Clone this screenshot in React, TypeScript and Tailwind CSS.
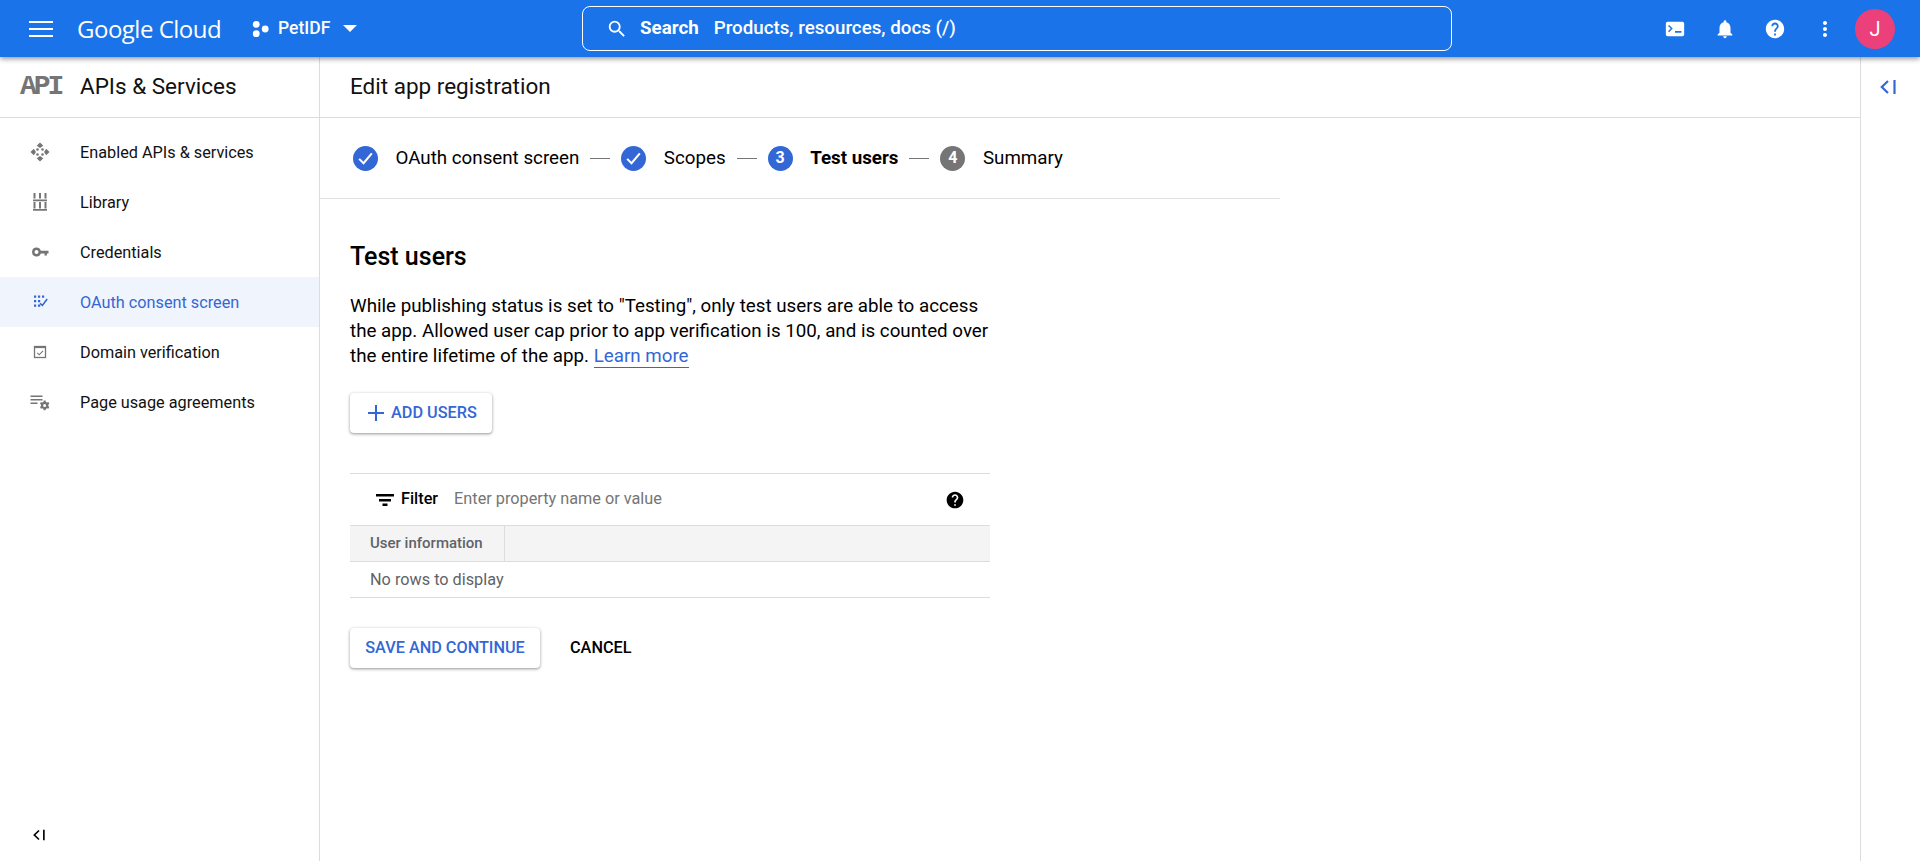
import React from 'react';

const Icon = ({ d, className }: { d: string; className?: string }) => (
  <svg viewBox="0 0 24 24" fill="currentColor" className={className}>
    <path d={d} />
  </svg>
);

const CollapseIcon = ({ className }: { className?: string }) => (
  <svg viewBox="0 0 16 14" fill="none" stroke="currentColor" strokeWidth="2.200" className={className}>
    <path d="M8 1 1.800 7 8 13" />
    <path d="M14.500 0v14" />
  </svg>
);

const navItems = [
  {
    label: 'Enabled APIs & services',
    icon: (
      <svg viewBox="0 0 20 20" fill="currentColor" className="w-5 h-5">
        <path d="M10 0.500 13.300 3.800 10 6 6.700 3.800zM10 19.500 6.700 16.200 10 14 13.300 16.200zM0.500 10 3.800 6.700 6 10 3.800 13.300zM19.500 10 16.200 13.300 14 10 16.200 6.700z" />
        <circle cx="7.500" cy="7.500" r="1.300" /><circle cx="12.500" cy="7.500" r="1.300" />
        <circle cx="7.500" cy="12.500" r="1.300" /><circle cx="12.500" cy="12.500" r="1.300" />
      </svg>
    ),
  },
  {
    label: 'Library',
    icon: (
      <svg viewBox="0 0 20 20" fill="currentColor" className="w-5 h-5">
        <path d="M3.500 1h2v5.500h-2zM9 1h2v5.500H9zM14.500 1h2v5.500h-2zM3 7.500h14v1.800H3zM3.500 10h2v6.500h-2zM9 10h2v6.500H9zM14.500 10h2v6.500h-2zM3 17h14v1.800H3z" />
      </svg>
    ),
  },
  {
    label: 'Credentials',
    icon: (
      <svg viewBox="0 0 20 20" fill="currentColor" className="w-5 h-5">
        <path fillRule="evenodd" d="M6.500 5.500a4.500 4.500 0 0 1 4.300 3.200H18.500v2.800h-1.600v2h-2.400v-2h-3.700a4.500 4.500 0 1 1-4.300-6zm0 2.500a2 2 0 1 0 0 4 2 2 0 0 0 0-4z" />
      </svg>
    ),
  },
  {
    label: 'OAuth consent screen',
    active: true,
    icon: (
      <svg viewBox="0 0 20 20" fill="currentColor" className="w-5 h-5">
        <path d="M4 3.500h2.200v2.200H4zM8 3.500h2.200v2.200H8zM12 3.500h2.200v2.200H12zM4 8h2.200v2.200H4zM8 8h2.200v2.200H8zM4 12.500h2.200v2.200H4zM8 12.500h2.200v2.200H8z" />
        <path d="m16.500 6.500 1.300 1.100-5.300 6.900-3-2.600 1-1.200 1.800 1.500z" />
      </svg>
    ),
  },
  {
    label: 'Domain verification',
    icon: (
      <svg viewBox="0 0 20 20" fill="none" stroke="currentColor" className="w-5 h-5">
        <rect x="4.500" y="4.500" width="11" height="11" strokeWidth="1.300" />
        <path d="M4.500 5.500h11" strokeWidth="1.200" />
        <path d="m7.200 10.800 2 2 3.800-4" strokeWidth="1.100" />
      </svg>
    ),
  },
  {
    label: 'Page usage agreements',
    icon: (
      <svg viewBox="0 0 20 20" fill="currentColor" className="w-5 h-5">
        <path d="M0.500 3.500h12v1.400H.5zM.5 7h12v1.400H.5zM.5 10.500h7v1.400h-7z" />
        <path fillRule="evenodd" d="M13.700 8.500h1.900l.3 1.400 1.100.6 1.400-.4.900 1.600-1 1v1.400l1 1-.9 1.600-1.400-.4-1.100.6-.3 1.400h-1.900l-.3-1.400-1.100-.6-1.400.4-.9-1.600 1-1v-1.400l-1-1 .9-1.600 1.400.4 1.100-.6zM14.650 12a1.500 1.500 0 1 0 0 3 1.500 1.500 0 0 0 0-3z" />
      </svg>
    ),
  },
];

const Step = ({ num, label, done, current }: { num: number; label: string; done?: boolean; current?: boolean }) => (
  <div className="flex items-center">
    <div className={`w-[25px] h-[25px] rounded-full flex items-center justify-center text-white text-[16px] font-bold ${done || current ? 'bg-[#3367d6]' : 'bg-[#757575]'}`}>
      {done ? (
        <svg viewBox="0 0 24 24" fill="none" stroke="white" strokeWidth="2.600" className="w-[19px] h-[19px]">
          <path d="M4 12.500 9.500 18 20 5.500" />
        </svg>
      ) : (
        num
      )}
    </div>
    <span className={`ml-[17.500px] text-[18.750px] leading-none text-black ${current ? 'font-bold' : ''}`}>{label}</span>
  </div>
);

const StepLine = () => <div className="w-5 h-px bg-[#757575] mx-[11px]" />;

export default function App() {
  return (
    <div className="h-[861px] w-[1920px] overflow-hidden bg-white flex flex-col font-['Roboto',sans-serif] text-black">
      {/* Top bar */}
      <header className="relative z-10 h-[57px] shrink-0 bg-[#1a73e8] shadow-[0_2px_5px_rgba(0,0,0,0.4)] flex items-center text-white">
        <div className="w-[582px] flex items-center shrink-0">
          <svg viewBox="0 0 24 16" fill="white" className="ml-[29px] w-6 h-4">
            <path d="M0 0h24v2H0zM0 7h24v2H0zM0 14h24v2H0z" />
          </svg>
          <span className="ml-[24px] text-[24px] leading-none tracking-[-0.5px] font-['Open_Sans',sans-serif] w-[144px] whitespace-nowrap">Google Cloud</span>
          <svg viewBox="0 0 20 20" fill="white" className="ml-[31px] w-[17px] h-[20px]">
            <circle cx="5" cy="4.500" r="4" /><circle cx="5" cy="15.500" r="4" /><circle cx="15.500" cy="10" r="4" />
          </svg>
          <span className="ml-[9px] text-[17.500px] font-medium">PetIDF</span>
          <svg viewBox="0 0 14 7" fill="white" className="ml-[13px] w-[14px] h-[7px]">
            <path d="M0 0h14L7 7z" />
          </svg>
        </div>
        <div className="w-[870px] h-[45px] border border-white rounded-lg flex items-center text-[18.750px] shrink-0">
          <Icon className="ml-[23px] w-[22px] h-[22px]" d="M15.500 14h-.79l-.28-.27A6.471 6.471 0 0 0 16 9.500 6.500 6.500 0 1 0 9.500 16c1.610 0 3.090-.59 4.230-1.570l.27.28v.79l5 4.990L20.490 19l-4.990-5zm-6 0C7.010 14 5 11.990 5 9.500S7.010 5 9.500 5 14 7.010 14 9.500 11.990 14 9.500 14z" />
          <span className="ml-[12px] font-bold">Search</span>
          <span className="ml-[15px] font-medium">Products, resources, docs (/)</span>
        </div>
        <div className="flex-1 flex items-center justify-end">
          <Icon className="w-[22px] h-[22px]" d="M20 4H4a2 2 0 0 0-2 2v12a2 2 0 0 0 2 2h16a2 2 0 0 0 2-2V6a2 2 0 0 0-2-2zM5.500 15.500 4.400 14.400 7.300 11.500 4.400 8.600l1.100-1.100 4 4zM19 16h-7v-1.800h7z" />
          <Icon className="ml-[28px] w-[22px] h-[22px]" d="M12 22c1.100 0 2-.9 2-2h-4c0 1.100.89 2 2 2zm6-6v-5c0-3.070-1.640-5.640-4.500-6.320V4c0-.83-.67-1.500-1.500-1.500s-1.500.67-1.500 1.500v.68C7.630 5.360 6 7.920 6 11v5l-2 2v1h16v-1l-2-2z" />
          <Icon className="ml-[28px] w-[22px] h-[22px]" d="M12 2C6.480 2 2 6.480 2 12s4.480 10 10 10 10-4.480 10-10S17.520 2 12 2zm1 17h-2v-2h2v2zm2.070-7.750-.9.920C13.450 12.900 13 13.500 13 15h-2v-.5c0-1.100.45-2.100 1.170-2.830l1.240-1.260c.37-.36.590-.86.590-1.410 0-1.100-.9-2-2-2s-2 .9-2 2H8c0-2.210 1.790-4 4-4s4 1.790 4 4c0 .88-.36 1.680-.93 2.250z" />
          <Icon className="ml-[27px] w-6 h-6" d="M12 8c1.100 0 2-.9 2-2s-.9-2-2-2-2 .9-2 2 .9 2 2 2zm0 2c-1.100 0-2 .9-2 2s.9 2 2 2 2-.9 2-2-.9-2-2-2zm0 6c-1.100 0-2 .9-2 2s.9 2 2 2 2-.9 2-2-.9-2-2-2z" />
          <div className="ml-[18px] mr-[25px] w-10 h-10 rounded-full bg-[#ec407a] flex items-center justify-center text-[20px]">J</div>
        </div>
      </header>

      <div className="flex-1 flex min-h-0">
        {/* Left nav */}
        <aside className="w-[320px] shrink-0 border-r border-[#dadce0] flex flex-col">
          <div className="h-[61px] shrink-0 border-b border-[#dadce0] flex items-center">
            <span className="ml-[20px] w-[40px] text-[28px] leading-none font-bold text-[#757575] font-['Liberation_Mono',monospace] tracking-[-3px]">API</span>
            <span className="ml-[20px] text-[22.500px] text-[#111111]">APIs &amp; Services</span>
          </div>
          <nav className="pt-[9px] flex-1">
            {navItems.map((item) => (
              <div key={item.label} className={`h-[50px] flex items-center text-[16.250px] ${item.active ? 'bg-[#f0f4fc] text-[#3367d6]' : 'text-[#111111]'}`}>
                <div className={`ml-[30px] w-5 h-5 ${item.active ? 'text-[#3367d6]' : 'text-[#757575]'}`}>{item.icon}</div>
                <span className="ml-[30px] pt-[2px]">{item.label}</span>
              </div>
            ))}
          </nav>
          <div className="h-[52px] shrink-0 flex items-center">
            <CollapseIcon className="ml-[33px] w-[12px] h-[12px]" />
          </div>
        </aside>

        {/* Main */}
        <main className="flex-1 min-w-0">
          <div className="h-[61px] border-b border-[#dadce0] flex items-center pl-[30px] text-[22.500px] text-[#111111]">Edit app registration</div>
          <div className="w-[960px] h-[81px] border-b border-[#e0e0e0] flex items-center pl-[33px]">
            <Step num={1} label="OAuth consent screen" done />
            <StepLine />
            <Step num={2} label="Scopes" done />
            <StepLine />
            <Step num={3} label="Test users" current />
            <StepLine />
            <Step num={4} label="Summary" />
          </div>
          <div className="pl-[30px] pt-[43px] w-[670px]">
            <h2 className="text-[25px] leading-[30px] font-medium">Test users</h2>
            <p className="mt-[22px] text-[18.750px] leading-[25px] w-[640px]">
              While publishing status is set to "Testing", only test users are able to access the app. Allowed user cap prior to app verification is 100, and is counted over the entire lifetime of the app.{' '}
              <span className="text-[#3367d6] border-b border-[#3367d6]">Learn more</span>
            </p>
            <button className="mt-[24px] h-10 w-[142px] rounded bg-white shadow-[0_1px_3px_1px_rgba(60,64,67,0.2),0_1px_2px_rgba(60,64,67,0.3)] flex items-center text-[16.250px] font-medium text-[#3367d6]">
              <svg viewBox="0 0 14 14" fill="currentColor" className="ml-[18px] w-[16px] h-[16px]">
                <path d="M6.100 0h1.800v6.100H14v1.800H7.900V14H6.100V7.900H0V6.100h6.100z" />
              </svg>
              <span className="ml-[7px]">ADD USERS</span>
            </button>
            <div className="mt-[40px] w-[640px] border-t border-[#dadce0] text-[16.250px]">
              <div className="h-[51px] flex items-center">
                <svg viewBox="0 0 18 12" fill="black" className="ml-[26px] w-[18px] h-[14px]">
                  <path d="M0 0h18v2.400H0zM3 5h12v2.400H3zM6.500 9.600h5V12h-5z" />
                </svg>
                <span className="ml-[7px] font-medium">Filter</span>
                <span className="ml-[16px] text-[#757575]">Enter property name or value</span>
                <Icon className="ml-auto mr-[25px] w-[20px] h-[20px]" d="M12 2C6.480 2 2 6.480 2 12s4.480 10 10 10 10-4.480 10-10S17.520 2 12 2zm1 17h-2v-2h2v2zm2.070-7.750-.9.920C13.450 12.900 13 13.500 13 15h-2v-.5c0-1.100.45-2.100 1.170-2.830l1.240-1.260c.37-.36.590-.86.590-1.410 0-1.100-.9-2-2-2s-2 .9-2 2H8c0-2.210 1.790-4 4-4s4 1.790 4 4c0 .88-.36 1.680-.93 2.250z" />
              </div>
              <div className="h-[37px] border-y border-[#dadce0] bg-[#f4f4f4] flex">
                <div className="w-[155px] border-r border-[#dadce0] pl-[20px] flex items-center text-[15px] font-medium text-[#5f6368]">User information</div>
              </div>
              <div className="h-[36px] border-b border-[#dadce0] pl-[20px] pt-[2px] flex items-center text-[#5f6368]">No rows to display</div>
            </div>
            <div className="mt-[30px] flex items-center">
              <button className="h-10 w-[190px] rounded bg-white shadow-[0_1px_3px_1px_rgba(60,64,67,0.2),0_1px_2px_rgba(60,64,67,0.3)] text-[16.250px] font-medium text-[#3367d6]">SAVE AND CONTINUE</button>
              <button className="ml-[30px] text-[16.250px] font-medium text-black">CANCEL</button>
            </div>
          </div>
        </main>

        {/* Right rail */}
        <aside className="w-[60px] shrink-0 border-l border-[#dadce0] flex justify-center pt-[23px] pr-[5px]">
          <CollapseIcon className="w-[16px] h-[14px] text-[#3367d6]" />
        </aside>
      </div>
    </div>
  );
}
